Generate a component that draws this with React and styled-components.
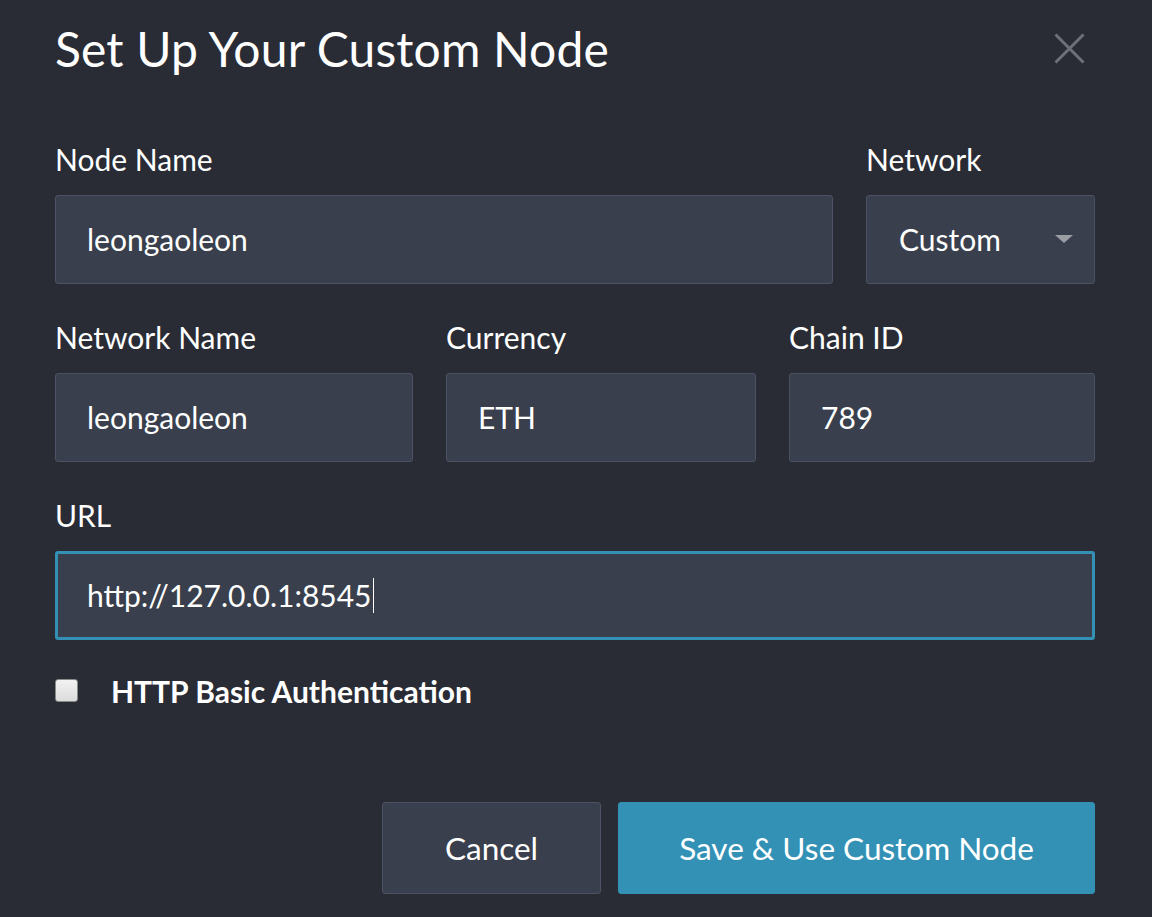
import React from "react";
import styled, { createGlobalStyle } from "styled-components";

const Global = createGlobalStyle`
  html, body { margin: 0; padding: 0; background: #292c35; }
  body { font-family: Lato, "Open Sans", sans-serif; color: #ffffff; }
  * { box-sizing: border-box; }
`;

const Modal = styled.div`
  width: 1152px;
  min-height: 917px;
  padding: 20px 57px 0 55px;
  background: #292c35;
`;

const Header = styled.div`
  display: flex;
  align-items: center;
  justify-content: space-between;
`;

const Title = styled.h1`
  margin: 0;
  font-size: 48px;
  font-weight: 400;
  line-height: 1.2;
  letter-spacing: 0.15px;
  color: #ffffff;
`;

const Close = styled.button`
  border: 0;
  background: none;
  padding: 0;
  margin-right: 10px;
  width: 32px;
  height: 32px;
  display: flex;
  align-items: center;
  justify-content: center;
  cursor: pointer;
`;

const Row = styled.div`
  display: grid;
  grid-template-columns: ${(p) => p.$cols};
  column-gap: 33px;
  margin-top: ${(p) => p.$top}px;
`;

const Field = styled.div`
  display: flex;
  flex-direction: column;
  min-width: 0;
`;

const Label = styled.label`
  font-size: 30px;
  line-height: 36px;
  font-weight: 400;
  color: #ffffff;
  margin-bottom: 18px;
`;

const Input = styled.input`
  height: 89px;
  width: 100%;
  background: #393f4c;
  border: 1px solid #4c5263;
  border-radius: 3px;
  color: #ffffff;
  font-family: Lato, sans-serif;
  font-size: 30px;
  padding: 0 31px;
  outline: none;
`;

const ActiveInput = styled.div`
  height: 89px;
  width: 100%;
  background: #393f4c;
  border: 3px solid #3391b6;
  border-radius: 3px;
  color: #ffffff;
  font-size: 30px;
  padding: 0 29px;
  display: flex;
  align-items: center;
`;

const TextCaret = styled.span`
  display: inline-block;
  width: 1.5px;
  height: 35px;
  margin-left: 1px;
  background: #ffffff;
`;

const Select = styled.div`
  height: 89px;
  background: #393f4c;
  border: 1px solid #4c5263;
  border-radius: 3px;
  display: flex;
  align-items: center;
  justify-content: space-between;
  padding: 0 21px 0 32px;
  font-size: 30px;
  color: #ffffff;
`;

const Caret = styled.span`
  width: 0;
  height: 0;
  border-left: 9.5px solid transparent;
  border-right: 9.5px solid transparent;
  border-top: 8px solid #9c9ea4;
`;

const CheckRow = styled.label`
  display: flex;
  align-items: center;
  gap: 33px;
  margin-top: 33px;
`;

const Box = styled.span`
  width: 23px;
  height: 23px;
  border-radius: 3px;
  background: linear-gradient(#f2f2f2, #dcdcdc);
  border: 1px solid #8a8a8a;
  flex: none;
`;

const CheckText = styled.span`
  font-size: 30px;
  font-weight: 700;
  line-height: 36px;
  color: #ffffff;
`;

const Actions = styled.div`
  display: flex;
  justify-content: flex-end;
  gap: 17px;
  margin-top: 93px;
`;

const Button = styled.button`
  height: 92px;
  width: ${(p) => p.$w}px;
  padding: 0;
  border-radius: 3px;
  font-family: Lato, sans-serif;
  font-size: 31.5px;
  font-weight: 400;
  color: #ffffff;
  background: ${(p) => (p.$primary ? "#3391b6" : "#393f4c")};
  border: 1px solid ${(p) => (p.$primary ? "#3391b6" : "#4c5263")};
  cursor: pointer;
`;

export default function App() {
  return (
    <>
      <Global />
      <Modal>
        <Header>
          <Title>Set Up Your Custom Node</Title>
          <Close aria-label="Close">
            <svg width="31" height="31" viewBox="0 0 31 31">
              <path d="M1.5 1.5 L29.5 29.5 M29.5 1.5 L1.5 29.5" stroke="#6d7078" strokeWidth="3" fill="none" />
            </svg>
          </Close>
        </Header>

        <Row $cols="1fr 229px" $top={63}>
          <Field>
            <Label>Node Name</Label>
            <Input readOnly value="leongaoleon" />
          </Field>
          <Field>
            <Label>Network</Label>
            <Select>
              <span>Custom</span>
              <Caret />
            </Select>
          </Field>
        </Row>

        <Row $cols="358px 310px 1fr" $top={35}>
          <Field>
            <Label>Network Name</Label>
            <Input readOnly value="leongaoleon" />
          </Field>
          <Field>
            <Label>Currency</Label>
            <Input readOnly value="ETH" />
          </Field>
          <Field>
            <Label>Chain ID</Label>
            <Input readOnly value="789" />
          </Field>
        </Row>

        <Row $cols="1fr" $top={35}>
          <Field>
            <Label>URL</Label>
            <ActiveInput role="textbox">
              <span>http://127.0.0.1:8545</span>
              <TextCaret />
            </ActiveInput>
          </Field>
        </Row>

        <CheckRow>
          <Box />
          <CheckText>HTTP Basic Authentication</CheckText>
        </CheckRow>

        <Actions>
          <Button $w={219}>Cancel</Button>
          <Button $w={477} $primary>Save &amp; Use Custom Node</Button>
        </Actions>
      </Modal>
    </>
  );
}
